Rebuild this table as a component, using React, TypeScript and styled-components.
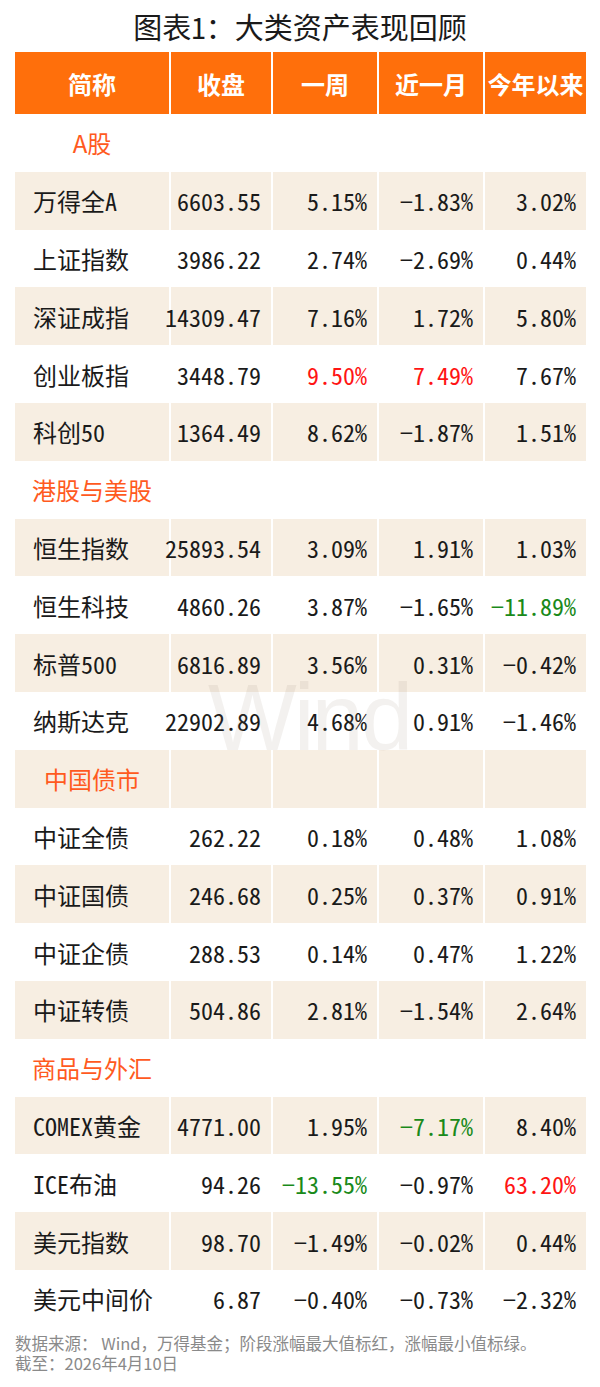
import React from "react";
import styled, { createGlobalStyle } from "styled-components";

const Global = createGlobalStyle`
  html, body { margin: 0; padding: 0; background: #ffffff; }
  body { font-family: "Noto Sans CJK SC", "Noto Sans", sans-serif; }
`;

const Page = styled.div`
  width: 600px;
  position: relative;
  background: #fff;
`;

const Title = styled.h1`
  margin: 0;
  height: 52px;
  display: flex;
  align-items: center;
  justify-content: center;
  font-family: "Noto Sans Mono CJK SC", "Noto Sans CJK SC", sans-serif;
  font-size: 29px;
  font-weight: 500;
  color: #1a1a1a;
`;

const Table = styled.div`
  margin: 0 14px 0 15px;
  display: grid;
  grid-template-columns: 154px 100px 104px 104px 101px;
  column-gap: 2px;
  position: relative;
`;

const HeadCell = styled.div`
  height: 62px;
  background: #ff6f0b;
  color: #fff;
  font-family: "Noto Sans CJK SC", sans-serif;
  font-weight: 700;
  font-size: 24px;
  display: flex;
  align-items: center;
  justify-content: center;
  white-space: nowrap;
`;

const Cell = styled.div<{ $shade: boolean; $align: "left" | "right" | "center"; $color?: string }>`
  height: 57.8px;
  background: ${(p) => (p.$shade ? "#f7eee2" : "#ffffff")};
  display: flex;
  align-items: center;
  justify-content: ${(p) => (p.$align === "left" ? "flex-start" : p.$align === "right" ? "flex-end" : "center")};
  padding: ${(p) => (p.$align === "left" ? "0 0 0 18px" : p.$align === "right" ? "0 10px 0 0" : "0")};
  font-family: "Noto Sans Mono CJK SC", "Noto Sans CJK SC", monospace;
  font-size: 24px;
  color: ${(p) => p.$color || "#1a1a1a"};
  white-space: nowrap;
  box-sizing: border-box;
`;

const SectionLabel = styled.span`
  color: #ff5a1e;
  font-family: "Noto Sans CJK SC", sans-serif;
  font-size: 24px;
`;

const Watermark = styled.div`
  position: absolute;
  left: 193px;
  top: 616px;
  font-family: "Liberation Sans", "Noto Sans", sans-serif;
  font-size: 94px;
  line-height: 100px;
  letter-spacing: -3px;
  color: rgba(140, 120, 100, 0.1);
  pointer-events: none;
  user-select: none;
`;

const Footer = styled.div`
  padding: 5px 0 0 15px;
  font-family: "Noto Sans CJK SC", sans-serif;
  font-size: 16.5px;
  line-height: 20px;
  color: #8a8a8a;
`;

type Row =
  | { kind: "section"; label: string }
  | { kind: "data"; name: string; vals: string[]; colors?: (string | undefined)[] };

const R = "#ff1414";
const G = "#1a8a1a";

const rows: Row[] = [
  { kind: "section", label: "A股" },
  { kind: "data", name: "万得全A", vals: ["6603.55", "5.15%", "−1.83%", "3.02%"] },
  { kind: "data", name: "上证指数", vals: ["3986.22", "2.74%", "−2.69%", "0.44%"] },
  { kind: "data", name: "深证成指", vals: ["14309.47", "7.16%", "1.72%", "5.80%"] },
  { kind: "data", name: "创业板指", vals: ["3448.79", "9.50%", "7.49%", "7.67%"], colors: [undefined, R, R, undefined] },
  { kind: "data", name: "科创50", vals: ["1364.49", "8.62%", "−1.87%", "1.51%"] },
  { kind: "section", label: "港股与美股" },
  { kind: "data", name: "恒生指数", vals: ["25893.54", "3.09%", "1.91%", "1.03%"] },
  { kind: "data", name: "恒生科技", vals: ["4860.26", "3.87%", "−1.65%", "−11.89%"], colors: [undefined, undefined, undefined, G] },
  { kind: "data", name: "标普500", vals: ["6816.89", "3.56%", "0.31%", "−0.42%"] },
  { kind: "data", name: "纳斯达克", vals: ["22902.89", "4.68%", "0.91%", "−1.46%"] },
  { kind: "section", label: "中国债市" },
  { kind: "data", name: "中证全债", vals: ["262.22", "0.18%", "0.48%", "1.08%"] },
  { kind: "data", name: "中证国债", vals: ["246.68", "0.25%", "0.37%", "0.91%"] },
  { kind: "data", name: "中证企债", vals: ["288.53", "0.14%", "0.47%", "1.22%"] },
  { kind: "data", name: "中证转债", vals: ["504.86", "2.81%", "−1.54%", "2.64%"] },
  { kind: "section", label: "商品与外汇" },
  { kind: "data", name: "COMEX黄金", vals: ["4771.00", "1.95%", "−7.17%", "8.40%"], colors: [undefined, undefined, G, undefined] },
  { kind: "data", name: "ICE布油", vals: ["94.26", "−13.55%", "−0.97%", "63.20%"], colors: [undefined, G, undefined, R] },
  { kind: "data", name: "美元指数", vals: ["98.70", "−1.49%", "−0.02%", "0.44%"] },
  { kind: "data", name: "美元中间价", vals: ["6.87", "−0.40%", "−0.73%", "−2.32%"] },
];

const headers = ["简称", "收盘", "一周", "近一月", "今年以来"];

export default function App() {
  return (
    <Page>
      <Global />
      <Title>图表1：大类资产表现回顾</Title>
      <Table>
        {headers.map((h) => (
          <HeadCell key={h}>{h}</HeadCell>
        ))}
        {rows.map((row, i) => {
          const shade = i % 2 === 1;
          if (row.kind === "section") {
            return (
              <React.Fragment key={i}>
                <Cell $shade={shade} $align="center">
                  <SectionLabel>{row.label}</SectionLabel>
                </Cell>
                {[0, 1, 2, 3].map((k) => (
                  <Cell key={k} $shade={shade} $align="right" />
                ))}
              </React.Fragment>
            );
          }
          return (
            <React.Fragment key={i}>
              <Cell $shade={shade} $align="left">{row.name}</Cell>
              {row.vals.map((v, k) => (
                <Cell key={k} $shade={shade} $align="right" $color={row.colors?.[k]}>
                  {v}
                </Cell>
              ))}
            </React.Fragment>
          );
        })}
        <Watermark>Wind</Watermark>
      </Table>
      <Footer>
        <div>数据来源： Wind，万得基金；阶段涨幅最大值标红，涨幅最小值标绿。</div>
        <div>截至：2026年4月10日</div>
      </Footer>
    </Page>
  );
}
